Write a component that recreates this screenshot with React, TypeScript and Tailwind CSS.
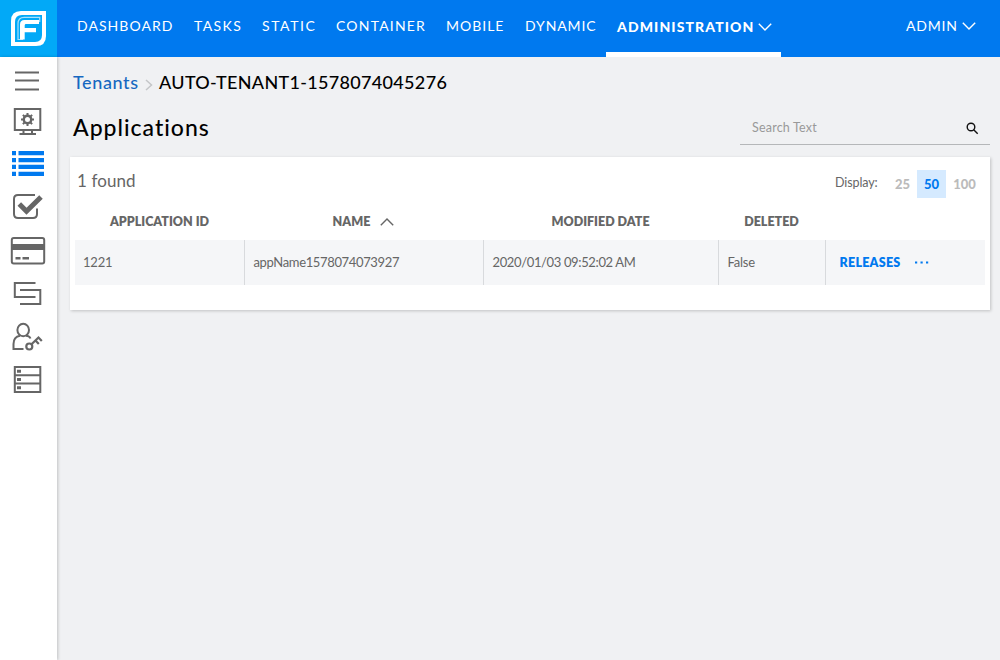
import type { ReactNode } from "react";

const Chevron = ({ className = "" }: { className?: string }) => (
  <svg className={className} width="14" height="8" viewBox="0 0 14 8" fill="none" stroke="currentColor" strokeWidth="1.4">
    <path d="M.8 .8 7 7 13.2 .8" />
  </svg>
);

function Logo() {
  return (
    <div className="flex size-[57px] shrink-0 items-center justify-center bg-[#02a9f7]">
      <svg width="35" height="35" viewBox="0 0 35 35" fill="none">
        <path d="M10 0H35V25Q35 35 25 35H0V10Q0 0 10 0Z" fill="#fff" />
        <path d="M11 4H31V24Q31 31 24 31H4V11Q4 4 11 4Z" fill="#02a9f7" />
        <path d="M12 28.500H7V12.500Q7 6.300 13.200 6.300H28.700V11" stroke="#fff" strokeWidth="1.200" opacity=".65" />
        <path d="M9 28.500V13.500Q9 9 13.500 9H28V13H15Q13.700 13 13.700 14.300V17H25V21.200H13.700V28.500Z" fill="#fff" />
      </svg>
    </div>
  );
}

const icons: { name: string; active?: boolean; art: ReactNode }[] = [
  {
    name: "menu",
    art: <path d="M5 12.500H29M5 20.500H29M5 29.500H29" strokeWidth="2" />,
  },
  {
    name: "system",
    art: (
      <>
        <path d="M4.800 9H30.300V30H4.800Z M13.500 30V33.500M22 30V33.500M9.500 34H26" />
        <circle cx="17.500" cy="19.500" r="3.700" strokeWidth="2.400" />
        <path d="M17.500 13V16M17.500 23V26M11 19.500H14M21 19.500H24M12.900 14.900 15 17M20 22 22.100 24.100M22.100 14.900 20 17M15 22 12.900 24.100" />
      </>
    ),
  },
  {
    name: "list",
    active: true,
    art: (
      <path
        stroke="none"
        fill="currentColor"
        d="M2 8h4v4.300H2zM8.500 8h25.500v4.300H8.500zM2 15h4v4.200H2zM8.500 15h25.500v4.200H8.500zM2 21.800h4V26H2zM8.500 21.800h25.500V26H8.500zM2 28.700h4V33H2zM8.500 28.700h25.500V33H8.500z"
      />
    ),
  },
  {
    name: "tasks",
    art: (
      <>
        <path d="M25 9H8Q4 9 4 13V28Q4 32 8 32H23Q27 32 27 28V22.500" />
        <path d="M9.300 18 16.500 25.300 31 11" strokeWidth="5" />
      </>
    ),
  },
  {
    name: "billing",
    art: (
      <>
        <rect x="1.800" y="9" width="32.400" height="25.500" rx="2" />
        <path d="M2 18H34" strokeWidth="6" />
        <path d="M5.500 29.300H10.500M12.500 29.300H19" strokeWidth="2.500" />
      </>
    ),
  },
  {
    name: "releases",
    art: <path d="M25.500 11H4.800V25H25.500M10 18H30.300V32H10" />,
  },
  {
    name: "roles",
    art: (
      <>
        <ellipse cx="13.200" cy="15" rx="5.800" ry="6.200" />
        <path d="M13.500 34H3.500V29Q3.500 22 10 20.800M16 20.800Q19.500 21 20.500 23.500" />
        <circle cx="19.300" cy="31.500" r="3" strokeWidth="2.200" />
        <path d="M21.500 29.300 28.500 22.500 31.800 26M25.500 25.500 28.800 29" strokeWidth="2.200" />
      </>
    ),
  },
  {
    name: "servers",
    art: (
      <>
        <path d="M4.800 9H30.300V34H4.800ZM4.800 17.300H30.300M4.800 25.600H30.300" />
        <path d="M7 13.200H11M7 21.500H11M7 29.800H11" strokeWidth="3" />
      </>
    ),
  },
];

const nav = [
  { label: "DASHBOARD", cls: "w-[117px] tracking-[1.05px]" },
  { label: "TASKS", cls: "w-[68px] tracking-[1.4px]" },
  { label: "STATIC", cls: "w-[74px] tracking-[1.6px]" },
  { label: "CONTAINER", cls: "w-[110px] tracking-[1.2px]" },
  { label: "MOBILE", cls: "w-[79px] tracking-[1px]" },
  { label: "DYNAMIC", cls: "w-[81px] tracking-[0.9px]" },
];

export default function App() {
  return (
    <div className="flex h-[660px] w-[1000px] flex-col overflow-hidden bg-[#f0f1f3] font-[Lato,'Open_Sans',sans-serif] text-[#666]">
      <header className="flex h-[57px] shrink-0 bg-[#0079ef] text-[14px] text-white">
        <Logo />
        <nav className="flex flex-1 pl-5 leading-[52px]">
          {nav.map((n) => (
            <a key={n.label} className={"block shrink-0 whitespace-nowrap " + n.cls}>{n.label}</a>
          ))}
          <a className="flex w-[175px] shrink-0 items-center border-b-[5px] border-white pt-0.5 pl-[11px] font-black whitespace-nowrap">
            <span className="w-[141px] tracking-[1.1px]">ADMINISTRATION</span>
            <Chevron />
          </a>
          <a className="mr-[24px] ml-auto flex h-[52px] items-center">
            <span className="w-[56px] tracking-[0.8px]">ADMIN</span>
            <Chevron />
          </a>
        </nav>
      </header>
      <div className="flex flex-1">
        <aside className="flex w-[57px] shrink-0 flex-col gap-[3px] bg-white pt-[3px] pl-2.5 shadow-[1px_0_3px_#0003]">
          {icons.map((i) => (
            <svg
              key={i.name}
              width="37"
              height="40"
              viewBox="0 0 37 40"
              fill="none"
              stroke="currentColor"
              strokeWidth="2"
              className={
                (i.active ? "text-[#0079ef]" : "text-[#666]") + (i.name === "menu" ? " -mb-[3px]" : "")
              }
            >
              {i.art}
            </svg>
          ))}
        </aside>
        <main className="flex-1 pr-[10px] pl-[13px]">
          <div className="flex h-[51px] items-center pl-[3px] text-[18px] font-medium">
            <a className="w-[72px] tracking-[0.6px] text-[#1668c1]">Tenants</a>
            <svg className="mt-1 mr-1.5 shrink-0" width="8" height="12" viewBox="0 0 8 12" fill="none" stroke="#c4c6c8" strokeWidth="1.5">
              <path d="M1 1 6.500 6 1 11" />
            </svg>
            <span className="tracking-[0.32px] whitespace-nowrap text-black">AUTO-TENANT1-1578074045276</span>
          </div>
          <div className="flex h-[49px] justify-between">
            <h1 className="pt-1 pl-[3px] text-[23px] leading-[30px] font-medium tracking-[1px] text-black">Applications</h1>
            <div className="flex h-[37px] w-[250px] items-center justify-between border-b border-[#b5b7b9] pr-[11px] pl-3 text-[12.500px] text-[#999]">
              <span className="pt-1 tracking-[0.2px]">Search Text</span>
              <svg className="mt-1" width="13" height="13" viewBox="0 0 13 13" fill="none" stroke="#111" strokeWidth="1.4">
                <circle cx="5" cy="5" r="3.800" />
                <path d="m7.700 7.700 4 4" />
              </svg>
            </div>
          </div>
          <section className="h-[153px] bg-white px-[5px] shadow-[1px_1px_3px_#0003]">
            <div className="flex h-[46px] items-start justify-between">
              <h2 className="pt-3 pl-0.5 text-[17px] leading-6 tracking-[0.1px]">1 found</h2>
              <div className="flex pt-[13px] text-[13px] leading-7 font-black text-[#bbb]">
                <span className="mr-[10px] -mt-px w-[43px] text-[12.500px] font-normal tracking-[-0.1px] whitespace-nowrap text-[#666]">Display:</span>
                <span className="w-[29px] text-center">25</span>
                <span className="w-[29px] bg-[#d5eaff] text-center text-[#0079ef]">50</span>
                <span className="w-[37px] text-center">100</span>
                <span className="w-0.5" />
              </div>
            </div>
            <table className="w-full table-fixed border-collapse text-[13px]">
              <colgroup>
                <col className="w-[169px]" />
                <col className="w-[239px]" />
                <col className="w-[235px]" />
                <col className="w-[107px]" />
                <col className="w-[160px]" />
              </colgroup>
              <thead>
                <tr className="h-[37px] text-[12.500px]">
                  <th className="pt-0.5 font-extrabold">APPLICATION ID</th>
                  <th className="pt-0.5 font-extrabold">
                    <span className="inline-flex items-center gap-2.5">NAME<Chevron className="-mt-0.5 rotate-180" /></span>
                  </th>
                  <th className="pt-0.5 font-extrabold">MODIFIED DATE</th>
                  <th className="pt-0.5 font-extrabold">DELETED</th>
                  <th />
                </tr>
              </thead>
              <tbody>
                <tr className="h-[45px] bg-[#f5f6f8]">
                  <td className="border-r border-[#d8dadd] pl-2 tracking-[-0.2px]">1221</td>
                  <td className="border-r border-[#d8dadd] pl-[9px] tracking-[-0.35px]">appName1578074073927</td>
                  <td className="border-r border-[#d8dadd] pl-[9px] tracking-[-0.36px]">2020/01/03 09:52:02 AM</td>
                  <td className="border-r border-[#d8dadd] pl-[9px] tracking-[-0.2px]">False</td>
                  <td className="pl-[14px] font-extrabold text-[#0079ef]">
                    <div className="flex items-center">
                      <span className="w-[75px] pt-0.5 text-[12.500px] tracking-[0.25px]">RELEASES</span>
                      <svg width="14" height="3" viewBox="0 0 14 3" fill="currentColor">
                        <path d="M0 .5h2.200v2H0zM5.500 .5h2.200v2H5.500zM11 .5h2.200v2H11z" />
                      </svg>
                    </div>
                  </td>
                </tr>
              </tbody>
            </table>
          </section>
        </main>
      </div>
    </div>
  );
}
